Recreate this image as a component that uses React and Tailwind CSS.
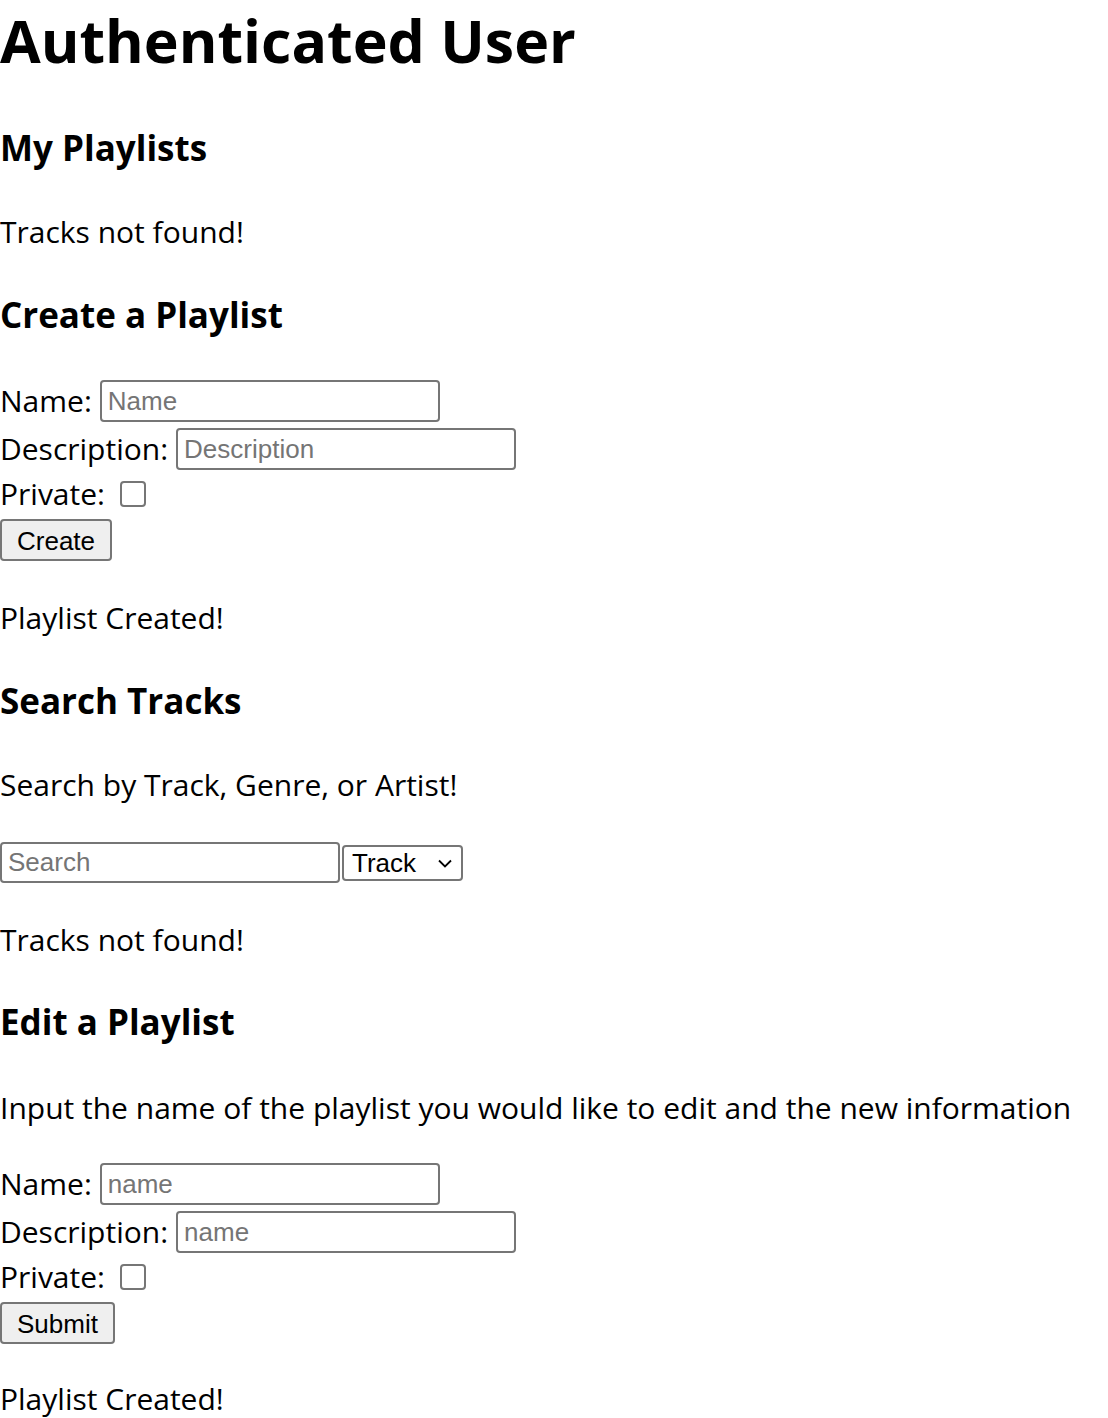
import React from "react";

const inputCls =
  "ml-[8px] w-[340px] h-[42px] border-2 border-[#767676] rounded-[4px] px-[6px] text-[26px] text-black placeholder:text-[#757575] bg-white outline-none font-['Liberation_Sans',Arial,sans-serif]";

function PlaylistForm({ namePh, descPh, button }) {
  return (
    <div className="flex flex-col">
      <div className="flex items-center h-[42px]">
        <span>Name:</span>
        <input className={inputCls} placeholder={namePh} />
      </div>
      <div className="flex items-center h-[42px] mt-[6px]">
        <span>Description:</span>
        <input className={inputCls} placeholder={descPh} />
      </div>
      <div className="flex items-center h-[40px] mt-[4px]">
        <span>Private:</span>
        <input
          type="checkbox"
          className="appearance-none ml-[15px] w-[26px] h-[26px] border-2 border-[#767676] rounded-[4px] bg-white"
        />
      </div>
      <div className="flex mt-[5px]">
        <button className="h-[42px] px-[15px] bg-[#efefef] border-2 border-[#767676] rounded-[4px] text-[26px] text-black font-['Liberation_Sans',Arial,sans-serif]">
          {button}
        </button>
      </div>
    </div>
  );
}

export default function App() {
  return (
    <div className="bg-white text-black font-['Open_Sans',sans-serif] text-[30px] leading-[40px]">
      <h1 className="text-[59px] leading-[80px] h-[80px] font-bold">Authenticated User</h1>

      <h3 className="mt-[44px] text-[35px] leading-[48px] font-bold">My Playlists</h3>
      <p className="mt-[40px]">Tracks not found!</p>

      <h3 className="mt-[39px] text-[35px] leading-[48px] font-bold">Create a Playlist</h3>
      <div className="mt-[41px]">
        <PlaylistForm namePh="Name" descPh="Description" button="Create" />
      </div>
      <p className="mt-[37px]">Playlist Created!</p>

      <h3 className="mt-[39px] text-[35px] leading-[48px] font-bold">Search Tracks</h3>
      <p className="mt-[40px]">Search by Track, Genre, or Artist!</p>
      <div className="mt-[37px] flex items-center gap-[2px] h-[41px]">
        <input
          className="w-[340px] h-[41px] border-2 border-[#767676] rounded-[4px] px-[6px] text-[26px] text-black placeholder:text-[#757575] bg-white outline-none font-['Liberation_Sans',Arial,sans-serif]"
          placeholder="Search"
        />
        <div className="relative flex">
          <select className="block appearance-none w-[121px] h-[36px] border-2 border-[#767676] rounded-[4px] pl-[8px] text-[26px] leading-[30px] text-black bg-white outline-none font-['Liberation_Sans',Arial,sans-serif]">
            <option>Track</option>
            <option>Genre</option>
            <option>Artist</option>
          </select>
          <svg
            className="absolute right-[11px] top-[14px] pointer-events-none"
            width="14"
            height="9"
            viewBox="0 0 14 9"
            fill="none"
          >
            <path d="M1 1.5 L7 7.5 L13 1.5" stroke="#000" strokeWidth="1.8" />
          </svg>
        </div>
      </div>
      <p className="mt-[37px]">Tracks not found!</p>

      <h3 className="mt-[38px] text-[35px] leading-[48px] font-bold">Edit a Playlist</h3>
      <p className="mt-[42px]">Input the name of the playlist you would like to edit and the new information</p>
      <div className="mt-[35px]">
        <PlaylistForm namePh="name" descPh="name" button="Submit" />
      </div>
      <p className="mt-[37px] leading-[36px]">Playlist Created!</p>
    </div>
  );
}
